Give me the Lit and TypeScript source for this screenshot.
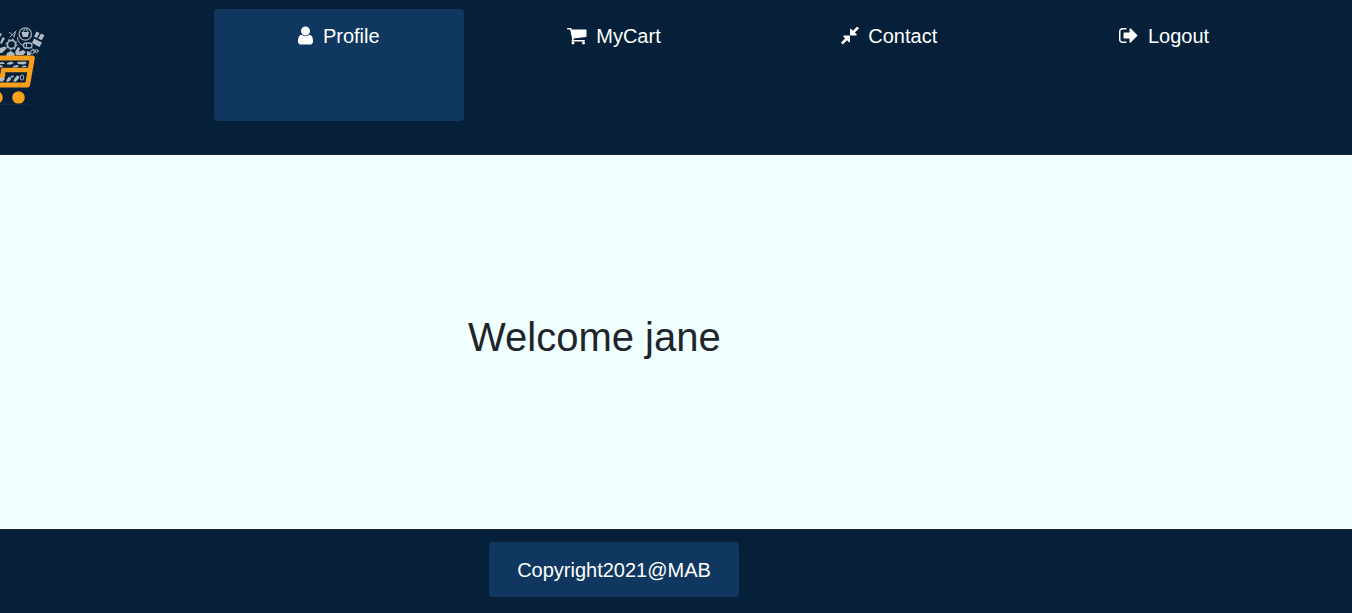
import { LitElement, html, css, svg } from "lit";
import { customElement } from "lit/decorators.js";

const items = [
  { label: "Profile", active: true, w: 15, box: "256 0 1280 1792", d: "M1536 1399q0 109-62.5 187t-150.5 78h-854q-88 0-150.5-78t-62.5-187q0-85 8.5-160.5t31.5-152 58.5-131 94-89 134.5-34.5q131 128 313 128t313-128q76 0 134.5 34.5t94 89 58.5 131 31.5 152 8.5 160.5zm-256-887q0 159-112.5 271.5t-271.5 112.5-271.5-112.5-112.5-271.5 112.5-271.5 271.5-112.5 271.5 112.5 112.5 271.5z" },
  { label: "MyCart", active: false, w: 19.5, box: "64 0 1664 1792", d: "M704 1536q0 52-38 90t-90 38-90-38-38-90 38-90 90-38 90 38 38 90zm896 0q0 52-38 90t-90 38-90-38-38-90 38-90 90-38 90 38 38 90zm128-1088v512q0 24-16.5 42.5t-40.5 21.5l-1044 122q13 60 13 70 0 16-24 64h920q26 0 45 19t19 45-19 45-45 19h-1024q-26 0-45-19t-19-45q0-11 8-31.5t16-36 21.5-40 15.5-29.5l-177-823h-204q-26 0-45-19t-19-45 19-45 45-19h256q16 0 28.5 6.5t19.5 15.5 13 24.5 8 26 5.5 29.5 4.5 26h1201q26 0 45 19t19 45z" },
  { label: "Contact", active: false, w: 18, box: "128 0 1536 1792", d: "M896 960v448q0 26-19 45t-45 19-45-19l-144-144-332 332q-10 10-23 10t-23-10l-114-114q-10-10-10-23t10-23l332-332-144-144q-19-19-19-45t19-45 45-19h448q26 0 45 19t19 45zm755-672q0 13-10 23l-332 332 144 144q19 19 19 45t-19 45-45 19h-448q-26 0-45-19t-19-45v-448q0-26 19-45t45-19 45 19l144 144 332-332q10-10 23-10t23 10l114 114q10 10 10 23z" },
  { label: "Logout", active: false, w: 19.5, box: "64 0 1664 1792", d: "M704 1440q0 4 1 20t.5 26.5-3 23.5-10 19.5-20.5 6.5h-320q-119 0-203.5-84.5t-84.5-203.5v-704q0-119 84.5-203.5t203.5-84.5h320q13 0 22.5 9.5t9.5 22.5q0 4 1 20t.5 26.5-3 23.5-10 19.5-20.5 6.5h-320q-66 0-113 47t-47 113v704q0 66 47 113t113 47h312l11.5 1 11.5 3 8 5.5 7 9 2 13.5zm928-544q0 26-19 45l-544 544q-19 19-45 19t-45-19-19-45v-288h-448q-26 0-45-19t-19-45v-384q0-26 19-45t45-19h448v-288q0-26 19-45t45-19 45 19l544 544q19 19 19 45z" },
];

const logo = svg`
  <g fill="none" stroke="#a9b3bd" stroke-width="1" stroke-linecap="round">
    <circle cx="25.3" cy="14" r="6.2" stroke-width="1.200"/>
    <path d="M10 17l6-6M9.500 12.500l4 3M14 17l1.500-5"/>
    <path d="M17.500 17.500q0 6 6 8"/>
    <circle cx="11.500" cy="24.500" r="4.200" stroke-width="1.800"/>
    <circle cx="11.500" cy="24.500" r="5.300" stroke-width="1.300" stroke-dasharray="1.500 2.660" stroke-linecap="butt"/>
    <rect x="23.500" y="23" width="8.500" height="5" rx="2.500" stroke-width="1.300"/>
    <path d="M26.500 23v5M32 29l4 2"/>
    <circle cx="32.500" cy="32" r="1.800"/><circle cx="36.500" cy="31" r="1.600"/>
  </g>
  <g fill="#b3bbc4">
    <path d="M21.500 12h7.600l-1.300 5h-5zM22.500 11.500l2-2.500.8.500-1.500 2zM28.500 11.500l-2-2.500-.8.500 1.500 2z"/>
    <path d="M36.500 11.500l3 1.500-2.500 5-3-1.500zM41 13.500l3.500 1.800-2.800 5-3.500-1.800zM34 18.500l8 4-2.500 4.500-7.500-4zM0 13l2 1-2 3zM2.500 17l2.500 1.500-3.500 5.500-1.500-1zM0 28l5-1.500 1.500 2L2 33H0zM7 33l4-2 4 3-1 2H6zM15 32l3-5 2 1-1 4 4-2 3 2-3 3h-7zM27 31l3 1 1 3-4 .500z"/>
  </g>
  <g fill="#b3bbc4">
    <path d="M0 42.500l3-.500 2 2H0zM7 43l4-1.500 3 1.500-3 1.500H7zM17 42l8-.500 2 1.500-3 1.500-6-.500zM13 46l4-1 2 1-2 1.500h-4zM22 46l4-.500.500 1.500-4 .500zM0 45.500h3l-1 2H0z"/>
    <path d="M0 57l3-.500 2 2-2 3H0zM6 61l2.500-4 3 .500-1 3-3 1.500zM10 56l4-.500-1 2.500zM13 61l2-3 2-2.500 2.500 1-1 2.500-3 3z"/>
  </g>
  <ellipse cx="22" cy="57.500" rx="1.700" ry="2.700" fill="none" stroke="#a9b3bd"/>
  <g fill="none" stroke="#f8a01c" stroke-linecap="round" stroke-linejoin="round">
    <path d="M-4 38H32.300L27.500 65H-4" stroke-width="5"/>
    <path d="M3.500 50H28M-3 55.500H3L3 50" stroke-width="4.500"/>
    <path d="M-3 45.500H0" stroke-width="2"/>
  </g>
  <circle cx="-3.500" cy="77.500" r="6.300" fill="#f8a01c"/>
  <circle cx="18.500" cy="77.500" r="6.300" fill="#f8a01c"/>
  <ellipse cx="11" cy="84.200" rx="19" ry=".8" fill="#182d40"/>`;

@customElement("app-root")
class AppRoot extends LitElement {
  static styles = css`
    :host { display: flex; flex-direction: column; height: 613px; overflow: hidden; background: #f0ffff; color: #212529; font-family: "Liberation Sans", Arial, sans-serif; font-size: 20px; line-height: 30px; }
    * { box-sizing: border-box; }
    header { display: flex; height: 155px; flex: none; background: #052038; padding-top: 9px; border-bottom: 1px solid #212529; }
    .brand { width: 214px; flex: none; padding-top: 11px; }
    .brand svg { display: block; }
    nav { display: flex; gap: 25px; }
    a { display: flex; justify-content: center; align-items: flex-start; gap: 9.5px; width: 250px; height: 112px; padding-top: 12px; border-radius: 4px; color: #fff; text-decoration: none; }
    .active { background: #0f375f; }
    a svg { display: block; height: 21px; margin-top: 4px; fill: #fff; }
    main { flex: 1; padding: 158px 0 0 468px; }
    h1 { margin: 0; font-size: 40px; line-height: 48px; font-weight: 400; }
    footer { height: 84px; flex: none; background: #052038; border-top: 1px solid #212529; padding: 12px 0 0 489px; }
    .copy { width: 250px; height: 55px; border-radius: 4px; background: #0f375f; color: #fff; text-align: center; padding-top: 13px; }
  `;
  render() {
    return html`
      <header>
        <div class="brand"><svg width="60" height="90" viewBox="0 0 60 90">${logo}</svg></div>
        <nav>${items.map(i => html`<a class=${i.active ? "active" : ""}><svg width=${i.w} height="21" viewBox=${i.box}><path d=${i.d}></path></svg><span>${i.label}</span></a>`)}</nav>
      </header>
      <main><h1>Welcome jane</h1></main>
      <footer><div class="copy">Copyright2021@MAB</div></footer>`;
  }
}
